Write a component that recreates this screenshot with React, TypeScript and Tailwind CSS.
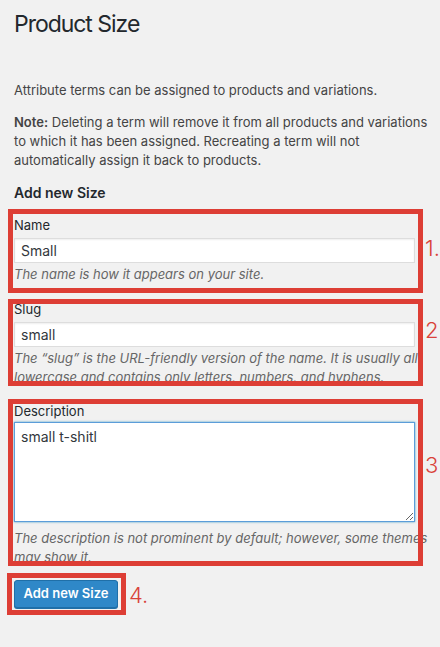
import React from "react";

const font = { fontFamily: "Inter, 'Noto Sans', Roboto, sans-serif" };

const inputCls =
  "block h-[25px] w-[95%] border border-[#ddd] bg-white px-[6px] text-[14px] text-[#32373c] shadow-[inset_0_1px_2px_rgba(0,0,0,0.07)] outline-none";

// red annotation frame drawn over a field
function Mark({ className }: { className: string }) {
  return (
    <div
      className={`pointer-events-none absolute border-[5px] border-[#dd3e35] ${className}`}
    />
  );
}

function Num({ children, className }: { children: React.ReactNode; className: string }) {
  return (
    <span
      className={`pointer-events-none absolute text-[22px] leading-none font-light text-[#d9423a] ${className}`}
    >
      {children}
    </span>
  );
}

export default function App() {
  return (
    <div className="relative h-[647px] w-[440px] overflow-hidden bg-[#f1f1f1]" style={font}>
      <div className="flex flex-col pl-[14px] pr-[4px]">
        <h1 className="pt-[9px] pb-[4px] text-[23px] leading-[30px] font-normal tracking-[-0.045em] text-[#23282d]">
          Product Size
        </h1>

        <p className="mt-[38px] text-[13px] leading-[19px] text-[#444]">
          Attribute terms can be assigned to products and variations.
        </p>
        <p className="mt-[13px] text-[13px] leading-[19px] text-[#444]">
          <strong className="font-semibold">Note:</strong> Deleting a term will remove it from all
          products and variations to which it has been assigned. Recreating a term will not
          automatically assign it back to products.
        </p>

        <h2 className="mt-[13px] text-[14px] leading-[19px] font-semibold text-[#23282d]">
          Add new Size
        </h2>

        {/* name */}
        <div className="relative mt-[14px] flex flex-col gap-[2.5px]">
          <label className="text-[13px] leading-[19px] text-[#23282d]">Name</label>
          <input readOnly value="Small" className={inputCls} style={font} />
          <p className="text-[13px] leading-[19px] italic text-[#666]">
            The name is how it appears on your site.
          </p>
          <Mark className="-left-[6px] -top-[7.5px] h-[84px] w-[415px]" />
          <Num className="left-[411px] top-[21px]">1.</Num>
        </div>

        {/* slug */}
        <div className="relative mt-[16px] flex flex-col gap-[2.5px]">
          <label className="text-[13px] leading-[19px] text-[#23282d]">Slug</label>
          <input readOnly value="small" className={inputCls} style={font} />
          <p className="text-[13px] leading-[19px] italic text-[#666]">
            The “slug” is the URL-friendly version of the name. It is usually all lowercase and
            contains only letters, numbers, and hyphens.
          </p>
          <Mark className="-left-[6px] -top-[1.5px] h-[87px] w-[415px]" />
          <Num className="left-[411px] top-[19px]">2</Num>
        </div>

        {/* description */}
        <div className="relative mt-[15px] flex flex-col">
          <label className="text-[13px] leading-[19px] text-[#23282d]">Description</label>
          <textarea
            readOnly
            value="small t-shitl"
            className="mt-[1px] block h-[100px] w-[95%] border border-[#5b9dd9] bg-white px-[6px] py-[4px] text-[14px] leading-[19px] text-[#32373c] shadow-[0_0_2px_rgba(30,140,190,0.8)] outline-none"
            style={font}
          />
          <p className="mt-[6.5px] text-[13px] leading-[19px] italic text-[#666]">
            The description is not prominent by default; however, some themes may show it.
          </p>
          <Mark className="-left-[6px] -top-[3.5px] h-[167px] w-[415px]" />
          <Num className="left-[411px] top-[52px]">3</Num>
        </div>

        {/* submit */}
        <div className="relative mt-[13.5px] flex w-fit">
          <button className="h-[28px] w-[104px] rounded-[3px] border border-[#1f6fa8] bg-[#2f88c8] text-[13px] font-semibold text-white shadow-[0_1px_0_#1f6fa8]">
            Add new Size
          </button>
          <Mark className="-left-[7px] -top-[7px] h-[42px] w-[119px]" />
          <Num className="left-[115px] top-[4px]">4.</Num>
        </div>
      </div>
    </div>
  );
}
